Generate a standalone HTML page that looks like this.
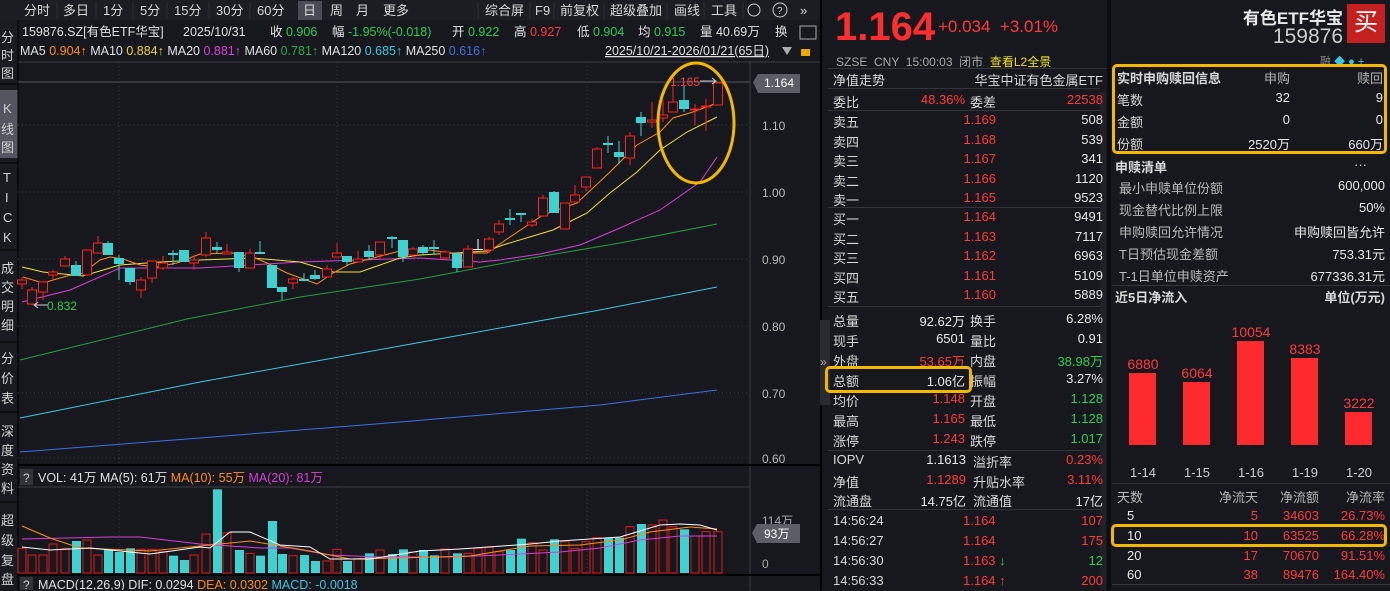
<!DOCTYPE html>
<html><head><meta charset="utf-8">
<style>
*{margin:0;padding:0;box-sizing:border-box}
body{width:1390px;height:590px;background:#17181d;font-family:"Liberation Sans","Noto Sans CJK SC",sans-serif;color:#d8d8d8;position:relative;overflow:hidden;font-size:12px}
.a{position:absolute;white-space:nowrap}
.r{color:#ff3b3b}.g{color:#2ecc55}.w{color:#e8e8e8}.gy{color:#b4b4b4}
.ln{position:absolute;height:1px;background:#33343a}
.row{position:absolute;left:833px;width:272px;height:20px;font-size:13px}
.row span{position:absolute;top:2px}
.rr{position:absolute;left:1115px;width:270px;font-size:13px;height:21px}
.rr span{position:absolute;top:2px}
</style></head><body>
<div class="a" style="left:1100px;top:92px;width:6px;height:498px;background:#202126"></div>
<svg class="a" style="left:0;top:0" width="820" height="590" font-family="Liberation Sans, Noto Sans CJK SC, sans-serif">
<rect x="0" y="0" width="820" height="20" fill="#1c1d22"/>
<rect x="0" y="20" width="18" height="570" fill="#1a1b20"/>
<rect x="0" y="90" width="18" height="68" fill="#55555f"/>
<g fill="#d8d8d8" font-size="13">
<text x="24" y="15">分时</text><text x="63" y="15">多日</text><text x="103" y="15">1分</text><text x="140" y="15">5分</text><text x="174" y="15">15分</text><text x="216" y="15">30分</text><text x="257" y="15">60分</text>
<rect x="298" y="1" width="24" height="19" fill="#4a4b55"/><text x="303" y="15">日</text><text x="330" y="15">周</text><text x="356" y="15">月</text><text x="383" y="15">更多</text>
<text x="485" y="15">综合屏</text><text x="535" y="15">F9</text><text x="560" y="15">前复权</text><text x="610" y="15">超级叠加</text><text x="674" y="15">画线</text><text x="711" y="15">工具</text>
<circle cx="754" cy="10" r="6" fill="none" stroke="#ccc"/><circle cx="780" cy="10" r="7" fill="none" stroke="#ccc"/><text x="777" y="14" font-size="10">?</text><text x="800" y="15">»</text>
</g>
<g stroke="#2c2d33"><line x1="57" y1="2" x2="57" y2="19"/><line x1="96" y1="2" x2="96" y2="19"/><line x1="133" y1="2" x2="133" y2="19"/><line x1="167" y1="2" x2="167" y2="19"/><line x1="209" y1="2" x2="209" y2="19"/><line x1="250" y1="2" x2="250" y2="19"/><line x1="478" y1="2" x2="478" y2="19"/><line x1="530" y1="2" x2="530" y2="19"/><line x1="554" y1="2" x2="554" y2="19"/><line x1="604" y1="2" x2="604" y2="19"/><line x1="667" y1="2" x2="667" y2="19"/><line x1="704" y1="2" x2="704" y2="19"/><line x1="743" y1="2" x2="743" y2="19"/></g>
<g fill="#d0d0d0" font-size="13">
<text x="1" y="42">分</text><text x="1" y="60">时</text><text x="1" y="78">图</text>
<text x="3" y="113">K</text><text x="1" y="134">线</text><text x="1" y="152">图</text>
<text x="3" y="182">T</text><text x="5" y="202">I</text><text x="3" y="222">C</text><text x="3" y="242">K</text>
<text x="1" y="273">成</text><text x="1" y="292">交</text><text x="1" y="311">明</text><text x="1" y="330">细</text>
<text x="1" y="363">分</text><text x="1" y="383">价</text><text x="1" y="403">表</text>
<text x="1" y="436">深</text><text x="1" y="455">度</text><text x="1" y="474">资</text><text x="1" y="493">料</text>
<text x="1" y="525">超</text><text x="1" y="545">级</text><text x="1" y="565">复</text><text x="1" y="584">盘</text>
</g>
<g stroke="#000"><line x1="0" y1="84" x2="18" y2="84"/><line x1="0" y1="163" x2="18" y2="163"/><line x1="0" y1="250" x2="18" y2="250"/><line x1="0" y1="342" x2="18" y2="342"/><line x1="0" y1="412" x2="18" y2="412"/><line x1="0" y1="502" x2="18" y2="502"/></g>
<line x1="18" y1="20" x2="18" y2="590" stroke="#000"/>
<g font-size="12.5">
<text x="22" y="36" fill="#e0e0e0">159876.SZ[有色ETF华宝]</text><text x="183" y="36" fill="#e0e0e0">2025/10/31</text>
<text x="270" y="36" fill="#e0e0e0">收 <tspan fill="#2ecc55">0.906</tspan></text>
<text x="332" y="36" fill="#e0e0e0">幅 <tspan fill="#2ecc55">-1.95%(-0.018)</tspan></text>
<text x="452" y="36" fill="#e0e0e0">开 <tspan fill="#2ecc55">0.922</tspan></text>
<text x="514" y="36" fill="#e0e0e0">高 <tspan fill="#ff3b3b">0.927</tspan></text>
<text x="577" y="36" fill="#e0e0e0">低 <tspan fill="#2ecc55">0.904</tspan></text>
<text x="638" y="36" fill="#e0e0e0">均 <tspan fill="#2ecc55">0.915</tspan></text>
<text x="700" y="36" fill="#e0e0e0">量 40.69万</text><text x="775" y="36" fill="#e0e0e0">换</text>
<rect x="800" y="26" width="16" height="13" fill="none" stroke="#aaa"/>
<text x="20" y="55" fill="#e0e0e0">MA5 <tspan fill="#ff8c1a">0.904↑</tspan> MA10 <tspan fill="#e8d33a">0.884↑</tspan> MA20 <tspan fill="#d640d6">0.881↑</tspan> MA60 <tspan fill="#2eaa4a">0.781↑</tspan> MA120 <tspan fill="#3ec6e0">0.685↑</tspan> MA250 <tspan fill="#3f6fe0">0.616↑</tspan></text>
<text x="605" y="55" fill="#e0e0e0" text-decoration="underline">2025/10/21-2026/01/21(65日)</text>
<path d="M782 47h10l-5 8z" fill="#aaa"/><rect x="801" y="49" width="9" height="7" fill="#f0a800"/>
</g>
<line x1="18" y1="62" x2="820" y2="62" stroke="#3a3b40"/>
<line x1="18" y1="82" x2="750" y2="82" stroke="#55565c"/>
<g stroke="#3a3b42" stroke-dasharray="1,3">
<line x1="18" y1="125" x2="750" y2="125"/><line x1="18" y1="192" x2="750" y2="192"/><line x1="18" y1="259" x2="750" y2="259"/><line x1="18" y1="326" x2="750" y2="326"/><line x1="18" y1="393" x2="750" y2="393"/><line x1="18" y1="458" x2="750" y2="458"/>
<line x1="119" y1="62" x2="119" y2="465"/><line x1="337" y1="62" x2="337" y2="465"/><line x1="587" y1="62" x2="587" y2="465"/>
<line x1="119" y1="487" x2="119" y2="573"/><line x1="337" y1="487" x2="337" y2="573"/><line x1="587" y1="487" x2="587" y2="573"/>
</g>
<line x1="750" y1="62" x2="750" y2="590" stroke="#3a3b40"/>
<g fill="#b8b8b8" font-size="12"><text x="762" y="130">1.10</text><text x="762" y="197">1.00</text><text x="762" y="264">0.90</text><text x="762" y="331">0.80</text><text x="762" y="398">0.70</text><text x="762" y="463">0.60</text></g>
<path d="M753 82l5-8h42v19h-42z" fill="#5c5d65"/><text x="764" y="87" fill="#fff" font-size="12">1.164</text>
<polyline fill="none" stroke="#3f70e0" points="20,452 200,438 400,422 600,405 717,390"/>
<polyline fill="none" stroke="#3ec6e0" points="20,418 200,382 400,346 600,310 717,287"/>
<polyline fill="none" stroke="#22a040" points="20,360 187,319 300,297 420,279 520,260 620,243 717,224"/>
<polyline fill="none" stroke="#d640d6" points="22,302 70,290 120,268 200,268 300,262 420,258 480,262 500,260 540,254 580,245 620,228 660,210 700,182 717,157"/>
<polyline fill="none" stroke="#f0e040" points="22,267 43,272 83,276 120,265 160,262 200,260 253,258 300,262 333,272 360,272 400,258 420,255 487,251 503,245 553,230 587,213 610,193 637,172 660,150 687,132 717,117"/>
<polyline fill="none" stroke="#ff8c1a" points="23,277 43,283 67,276 83,273 100,260 110,257 123,259 140,265 157,267 177,263 200,254 233,253 253,257 267,263 287,273 317,284 333,273 350,264 377,257 400,251 420,249 453,253 487,253 510,237 543,215 577,203 610,172 637,145 660,132 673,118 693,112 717,103"/>
<g id="cd"></g>
<text x="670" y="86" fill="#ff3b3b" font-size="12">1.165</text><path d="M700 81h16m-4-3l4 3-4 3" stroke="#ccc" fill="none"/>
<path d="M48 305h-14m4-3l-4 3 4 3" stroke="#ccc" fill="none"/><text x="47" y="310" fill="#2ecc55" font-size="12">0.832</text>
<ellipse cx="696" cy="123" rx="38" ry="60" fill="none" stroke="#f5b800" stroke-width="3"/>
<line x1="18" y1="465" x2="820" y2="465" stroke="#000" stroke-width="2"/>
<rect x="20" y="469" width="13" height="16" fill="#33343a"/><text x="23" y="482" fill="#ccc" font-size="12">?</text>
<text x="38" y="482" font-size="12.5" fill="#e0e0e0">VOL: 41万 MA(5): 61万 <tspan fill="#ff8c1a">MA(10): 55万</tspan> <tspan fill="#d640d6">MA(20): 81万</tspan></text>
<line x1="18" y1="487" x2="750" y2="487" stroke="#3a3b40"/>
<g id="vb"></g>
<polyline fill="none" stroke="#d640d6" points="22,539 110,537 140,537 200,544 260,548 290,548 330,555 380,557 450,557 500,555 560,552 600,548 640,540 680,536 717,536"/>
<polyline fill="none" stroke="#ff8c1a" points="22,526 50,538 80,548 150,551 200,546 250,541 310,551 350,559 400,558 470,556 530,546 580,545 620,540 650,532 690,527 717,529"/>
<polyline fill="none" stroke="#fff" points="22,547 50,550 90,548 150,554 200,547 210,548 230,532 250,532 280,545 310,547 330,559 370,559 420,551 460,549 530,544 560,541 620,537 660,525 680,524 700,525 717,530"/>
<text x="762" y="525" fill="#aaa" font-size="12">114万</text><text x="762" y="568" fill="#aaa" font-size="12">0</text>
<path d="M752 533l5-9h43v19h-43z" fill="#5c5d65"/><text x="764" y="538" fill="#fff" font-size="12">93万</text>
<line x1="18" y1="575" x2="820" y2="575" stroke="#000" stroke-width="2"/>
<rect x="20" y="577" width="13" height="13" fill="#33343a"/><text x="23" y="589" fill="#ccc" font-size="12">?</text>
<text x="38" y="589" font-size="12.5" fill="#e0e0e0">MACD(12,26,9) DIF: 0.0294 <tspan fill="#ff8c1a">DEA: 0.0302</tspan> <tspan fill="#3ec6e0">MACD: -0.0018</tspan></text>
</svg>

<div class="a" style="left:820px;top:0;width:2px;height:590px;background:#000"></div>
<div class="a" style="left:820px;top:320px;width:10px;height:85px;background:#2a2b30;color:#aaa;font-size:12px;padding-top:35px">»</div>
<div class="a r" style="left:835px;top:5px;font-size:40px;font-weight:bold;color:#ff2e2e">1.164</div>
<div class="a r" style="left:938px;top:17px;font-size:17px;color:#ff3b3b">+0.034 &nbsp;+3.01%</div>
<div class="a w" style="right:47px;top:4px;font-size:17px;font-weight:bold">有色ETF华宝</div>
<div class="a gy" style="right:47px;top:25px;font-size:21px;color:#ccc">159876</div>
<div class="a" style="left:1347px;top:4px;width:38px;height:39px;background:#c42020;color:#fff;font-size:24px;text-align:center;line-height:38px">买</div>
<div class="a gy" style="left:836px;top:53px;font-size:12px;color:#a8a8a8">SZSE &nbsp;CNY &nbsp;15:00:03 &nbsp;闭市 &nbsp;<span style="color:#f0e020">查看L2全景</span></div>
<div class="a" style="left:1320px;top:53px;font-size:11px;color:#888">融 <span style="color:#3ec6e0">◆ ● +</span></div>
<div class="ln" style="left:828px;top:68px;width:282px"></div>
<div class="row" style="top:68px"><span>净值走势</span><span style="right:2px">华宝中证有色金属ETF</span></div>
<div class="ln" style="left:828px;top:88px;width:272px"></div>
<div class="row" style="top:90px"><span>委比</span><span class="r" style="right:140px">48.36%</span><span style="left:137px">委差</span><span class="r" style="right:2px">22538</span></div>
<div class="ln" style="left:828px;top:110px;width:272px"></div>
<div class="row" style="top:110px"><span>卖五</span><span class="r" style="right:109px">1.169</span><span class="w" style="right:2px">508</span></div>
<div class="row" style="top:129.5px"><span>卖四</span><span class="r" style="right:109px">1.168</span><span class="w" style="right:2px">539</span></div>
<div class="row" style="top:149px"><span>卖三</span><span class="r" style="right:109px">1.167</span><span class="w" style="right:2px">341</span></div>
<div class="row" style="top:168.5px"><span>卖二</span><span class="r" style="right:109px">1.166</span><span class="w" style="right:2px">1120</span></div>
<div class="row" style="top:188px"><span>卖一</span><span class="r" style="right:109px">1.165</span><span class="w" style="right:2px">9523</span></div>
<div class="ln" style="left:828px;top:207px;width:272px"></div>
<div class="row" style="top:207px"><span>买一</span><span class="r" style="right:109px">1.164</span><span class="w" style="right:2px">9491</span></div>
<div class="row" style="top:226.5px"><span>买二</span><span class="r" style="right:109px">1.163</span><span class="w" style="right:2px">7117</span></div>
<div class="row" style="top:246px"><span>买三</span><span class="r" style="right:109px">1.162</span><span class="w" style="right:2px">6963</span></div>
<div class="row" style="top:265.5px"><span>买四</span><span class="r" style="right:109px">1.161</span><span class="w" style="right:2px">5109</span></div>
<div class="row" style="top:285px"><span>买五</span><span class="r" style="right:109px">1.160</span><span class="w" style="right:2px">5889</span></div>
<div class="ln" style="left:828px;top:306px;width:272px"></div>
<div class="row" style="top:309px"><span>总量</span><span class="w" style="right:140px">92.62万</span><span style="left:137px">换手</span><span class="w" style="right:2px">6.28%</span></div>
<div class="row" style="top:329px"><span>现手</span><span class="w" style="right:140px">6501</span><span style="left:137px">量比</span><span class="w" style="right:2px">0.91</span></div>
<div class="row" style="top:349px"><span>外盘</span><span class="r" style="right:140px">53.65万</span><span style="left:137px">内盘</span><span class="g" style="right:2px">38.98万</span></div>
<div class="row" style="top:369px"><span>总额</span><span class="w" style="right:140px">1.06亿</span><span style="left:137px">振幅</span><span class="w" style="right:2px">3.27%</span></div>
<div class="row" style="top:389px"><span>均价</span><span class="r" style="right:140px">1.148</span><span style="left:137px">开盘</span><span class="g" style="right:2px">1.128</span></div>
<div class="row" style="top:409px"><span>最高</span><span class="r" style="right:140px">1.165</span><span style="left:137px">最低</span><span class="g" style="right:2px">1.128</span></div>
<div class="row" style="top:429px"><span>涨停</span><span class="r" style="right:140px">1.243</span><span style="left:137px">跌停</span><span class="g" style="right:2px">1.017</span></div>
<div class="ln" style="left:828px;top:450px;width:272px"></div>
<div class="row" style="top:450px"><span>IOPV</span><span class="w" style="right:139px">1.1613</span><span style="left:140px">溢折率</span><span class="r" style="right:2px">0.23%</span></div>
<div class="row" style="top:470px"><span>净值</span><span class="r" style="right:139px">1.1289</span><span style="left:140px">升贴水率</span><span class="r" style="right:2px">3.11%</span></div>
<div class="row" style="top:489px"><span>流通盘</span><span class="w" style="right:139px">14.75亿</span><span style="left:140px">流通值</span><span class="w" style="right:2px">17亿</span></div>
<div class="ln" style="left:828px;top:509px;width:272px"></div>
<div class="row" style="top:511px"><span>14:56:24</span><span class="r" style="left:130px">1.164</span><span class="r" style="right:2px">107</span></div>
<div class="row" style="top:531px"><span>14:56:27</span><span class="r" style="left:130px">1.164</span><span class="r" style="right:2px">175</span></div>
<div class="row" style="top:551px"><span>14:56:30</span><span class="r" style="left:130px">1.163 <b class="g">↓</b></span><span class="g" style="right:2px">12</span></div>
<div class="row" style="top:571px"><span>14:56:33</span><span class="r" style="left:130px">1.164 <b>↑</b></span><span class="r" style="right:2px">200</span></div>
<div class="a" style="left:825px;top:366px;width:147px;height:27px;border:3px solid #f5b800;border-radius:5px"></div>
<div class="a" style="left:1107px;top:0;width:4px;height:590px;background:#0c0d10"></div>

<div class="a" style="left:1112px;top:64px;width:275px;height:90px;border:3px solid #f5b800;border-radius:5px"></div>
<div class="rr" style="top:66px;font-weight:bold"><span style="left:2px">实时申购赎回信息</span><span class="gy" style="right:95px;font-weight:normal">申购</span><span class="gy" style="right:2px;font-weight:normal">赎回</span></div>
<div class="rr" style="top:88px"><span style="left:2px">笔数</span><span class="w" style="right:95px">32</span><span class="w" style="right:2px">9</span></div>
<div class="rr" style="top:110px"><span style="left:2px">金额</span><span class="w" style="right:95px">0</span><span class="w" style="right:2px">0</span></div>
<div class="rr" style="top:132px"><span style="left:2px">份额</span><span class="w" style="right:95px">2520万</span><span class="w" style="right:2px">660万</span></div>
<div class="rr" style="top:155px;font-weight:bold"><span style="left:0">申赎清单</span><span style="right:18px;font-weight:normal">···</span></div>
<div class="rr" style="top:176px"><span style="left:4px;color:#bbb">最小申赎单位份额</span><span class="w" style="right:0">600,000</span></div>
<div class="rr" style="top:198px"><span style="left:4px;color:#bbb">现金替代比例上限</span><span class="w" style="right:0">50%</span></div>
<div class="rr" style="top:220px"><span style="left:4px;color:#bbb">申购赎回允许情况</span><span class="w" style="right:0">申购赎回皆允许</span></div>
<div class="rr" style="top:242px"><span style="left:4px;color:#bbb">T日预估现金差额</span><span class="w" style="right:0">753.31元</span></div>
<div class="rr" style="top:264px"><span style="left:4px;color:#bbb">T-1日单位申赎资产</span><span class="w" style="right:0">677336.31元</span></div>
<div class="ln" style="left:1112px;top:285px;width:278px"></div>
<div class="rr" style="top:285px;font-weight:bold"><span style="left:0">近5日净流入</span><span style="right:0">单位(万元)</span></div>
<svg class="a" style="left:1112px;top:300px" width="278" height="185" font-family="Liberation Sans, sans-serif" font-size="14">
<g fill="#ff2a2e"><rect x="17" y="73" width="27" height="72"/><rect x="71" y="82" width="27" height="63"/><rect x="125" y="41" width="27" height="104"/><rect x="179" y="58" width="27" height="87"/><rect x="233" y="112" width="27" height="33"/></g>
<g fill="#ff3b3b" text-anchor="middle"><text x="31" y="69">6880</text><text x="85" y="78">6064</text><text x="139" y="37">10054</text><text x="193" y="54">8383</text><text x="247" y="108">3222</text></g>
<g fill="#ccc" text-anchor="middle" font-size="13"><text x="31" y="177">1-14</text><text x="85" y="177">1-15</text><text x="139" y="177">1-16</text><text x="193" y="177">1-19</text><text x="247" y="177">1-20</text></g>
</svg>
<div class="ln" style="left:1112px;top:483px;width:278px"></div>
<div class="rr" style="top:485px"><span style="left:2px;color:#bbb">天数</span><span class="gy" style="right:127px">净流天</span><span class="gy" style="right:66px">净流额</span><span class="gy" style="right:0">净流率</span></div>
<div class="rr" style="top:506px"><span class="w" style="left:12px">5</span><span class="r" style="right:127px">5</span><span class="r" style="right:66px">34603</span><span class="r" style="right:0">26.73%</span></div>
<div class="rr" style="top:526px"><span class="w" style="left:12px">10</span><span class="r" style="right:127px">10</span><span class="r" style="right:66px">63525</span><span class="r" style="right:0">66.28%</span></div>
<div class="rr" style="top:546px"><span class="w" style="left:12px">20</span><span class="r" style="right:127px">17</span><span class="r" style="right:66px">70670</span><span class="r" style="right:0">91.51%</span></div>
<div class="rr" style="top:565px"><span class="w" style="left:12px">60</span><span class="r" style="right:127px">38</span><span class="r" style="right:66px">89476</span><span class="r" style="right:0">164.40%</span></div>
<div class="a" style="left:1111px;top:524px;width:276px;height:23px;border:3px solid #f5b800;border-radius:5px"></div>
<div class="ln" style="left:1112px;top:584px;width:278px"></div>

<script>
var C=[[22,'r',280,284,277,289],[32,'r',290,304,287,305],[43,'r',282,292,281,300],[53,'r',272,275,270,281],[65,'r',259,266,256,266],[76,'c',265,276,261,276],[87,'r',250,275,250,275],[98,'r',243,253,236,253],[108,'c',243,255,241,255],[119,'c',258,264,255,280],[130,'c',268,282,268,285],[141,'r',280,290,277,298],[152,'r',261,278,261,283],[163,'r',263,268,256,270],[173,'c',253,255,250,265],[184,'c',250,262,250,262],[194,'r',260,263,255,270],[206,'r',238,255,232,257],[217,'c',247,250,242,253],[227,'r',252,254,244,254],[239,'c',252,268,252,272],[250,'r',253,268,249,268],[260,'c',252,254,241,254],[272,'c',265,288,265,288],[282,'c',287,292,287,300],[293,'r',279,283,277,289],[304,'c',279,281,273,281],[315,'c',275,279,270,280],[327,'r',269,277,265,277],[337,'r',253,257,243,257],[347,'c',256,262,256,265],[358,'r',259,262,251,263],[369,'c',251,257,245,260],[380,'r',242,255,242,260],[392,'c',237,239,236,248],[403,'c',240,257,240,262],[413,'r',249,255,247,257],[423,'c',247,253,245,255],[434,'c',247,249,240,254],[445,'r',252,258,250,260],[457,'c',253,268,253,272],[468,'r',249,267,245,267],[478,'w',249,250,239,250],[489,'r',239,250,237,253],[499,'r',224,232,220,235],[510,'c',218,220,209,225],[521,'c',213,215,213,222],[532,'r',222,225,219,227],[543,'r',198,216,195,216],[554,'c',192,213,191,213],[565,'r',203,229,203,229],[575,'r',195,202,185,202],[586,'r',177,187,177,191],[597,'r',149,168,147,168],[608,'c',143,145,136,153],[619,'c',152,157,141,164],[630,'r',136,158,132,165],[641,'c',117,123,112,136],[652,'r',120,122,102,128],[663,'r',115,118,100,122],[673,'r',102,112,86,112],[684,'c',100,109,86,112],[695,'r',109,110,104,125],[706,'r',106,107,99,131],[718,'r',83,105,83,105]];
var V=[265,285,285,252,265,243,240,285,268,276,265,268,268,275,287,300,285,222,88,218,270,280,287,183,282,287,285,303,303,268,303,296,280,270,282,268,276,270,286,267,280,280,265,262,275,270,236,248,270,238,245,265,245,233,233,233,200,192,195,180,200,208,228,215,215];
var s='',v='';
C.forEach(function(d,i){var x=d[0],col=d[1]=='r'?'#ff2020':d[1]=='c'?'#3fd0d0':'#fff';
s+='<line x1="'+x+'" y1="'+d[4]+'" x2="'+x+'" y2="'+d[5]+'" stroke="'+col+'"/>';
var h=Math.max(1,d[3]-d[2]);
if(d[1]=='r')s+='<rect x="'+(x-4.5)+'" y="'+d[2]+'" width="9" height="'+h+'" fill="#17181d" stroke="'+col+'"/>';
else s+='<rect x="'+(x-5)+'" y="'+d[2]+'" width="10" height="'+h+'" fill="'+col+'"/>';
var t=V[i]/3+460,cc=(d[1]=='c')?'#3fd0d0':'#e01818';
if(d[1]=='c')v+='<rect x="'+(x-4)+'" y="'+t+'" width="9" height="'+(573-t)+'" fill="'+cc+'"/>';
else v+='<rect x="'+(x-4)+'" y="'+t+'" width="8" height="'+(573-t)+'" fill="none" stroke="'+cc+'"/>';
});
document.getElementById('cd').innerHTML=s;document.getElementById('vb').innerHTML=v;
</script>
</body></html>
